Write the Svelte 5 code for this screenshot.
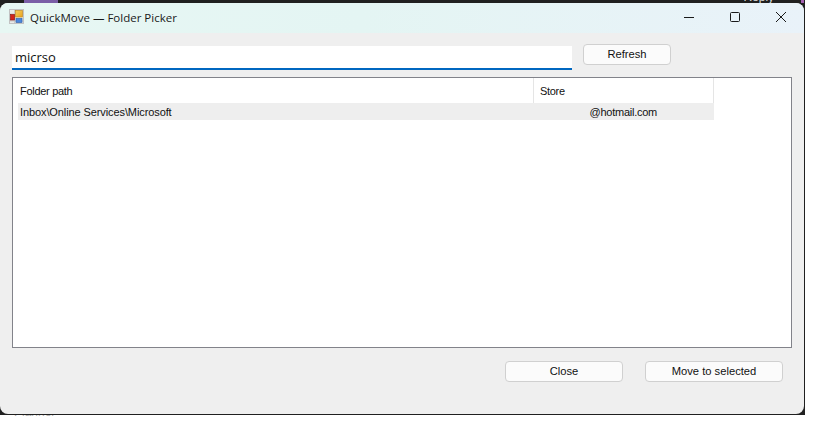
<script>
  const columns = [
    { key: 'path', label: 'Folder path' },
    { key: 'store', label: 'Store' }
  ];
  const row = { path: 'Inbox\\Online Services\\Microsoft', store: '@hotmail.com' };
</script>

<div class="page">
  <div class="desk">
    <div class="backdrop">
      <span class="blob"></span>
      <span class="reply">Reply</span>
      <span class="blob2"></span>
    </div>
    <div class="window">
      <header class="titlebar">
        <svg class="appicon" width="15" height="15" viewBox="0 0 15 15" aria-hidden="true">
          <defs>
            <linearGradient id="gold" x1="0" y1="0" x2="1" y2="1">
              <stop offset="0" stop-color="#f7cf5c"/>
              <stop offset="1" stop-color="#e9a21f"/>
            </linearGradient>
          </defs>
          <rect x="0.5" y="0.5" width="14" height="14" fill="#e9ebe9" stroke="#c2c2c2"/>
          <path d="M1 5h4.5M5.5 1v13M1 12h13" stroke="#c9c9c9" fill="none"/>
          <rect x="6.5" y="1.5" width="7" height="6.5" fill="url(#gold)" stroke="#c08a24" stroke-width="0.7"/>
          <rect x="1.5" y="5.5" width="4" height="5.5" fill="#d3231b" stroke="#8f1a14" stroke-width="0.7"/>
          <rect x="7" y="9.5" width="6" height="4" fill="#4c86dc" stroke="#3565ad" stroke-width="0.7"/>
        </svg>
        <span class="title">QuickMove — Folder Picker</span>
        <div class="controls">
          <button class="ctl" aria-label="Minimize">
            <svg width="12" height="12" viewBox="0 0 12 12"><path d="M1 6.5h10" stroke="#1a1a1a" fill="none"/></svg>
          </button>
          <button class="ctl" aria-label="Maximize">
            <svg width="12" height="12" viewBox="0 0 12 12"><rect x="1.5" y="1.5" width="9" height="9" rx="1" stroke="#1a1a1a" fill="none"/></svg>
          </button>
          <button class="ctl" aria-label="Close window">
            <svg width="12" height="12" viewBox="0 0 12 12"><path d="M1 1l10 10M11 1L1 11" stroke="#1a1a1a" fill="none"/></svg>
          </button>
        </div>
      </header>

      <div class="body">
        <div class="search">
          <div class="input">micrso</div>
          <button class="btn refresh">Refresh</button>
        </div>

        <div class="list">
          <div class="table">
            <div class="head">
              {#each columns as c}
                <div class="hcell {c.key}">{c.label}</div>
              {/each}
            </div>
            <div class="row">
              <div class="cell path">{row.path}</div>
              <div class="cell store">{row.store}</div>
            </div>
          </div>
        </div>

        <div class="actions">
          <button class="btn close">Close</button>
          <button class="btn move">Move to selected</button>
        </div>
      </div>
    </div>
  </div>
  <div class="under"><span>Planner</span></div>
</div>

<style>
  :global(body) {
    margin: 0;
    background: #fff;
    overflow: hidden;
  }
  .page {
    width: 821px;
    height: 422px;
    font-family: "Liberation Sans", Arial, sans-serif;
    font-size: 11px;
    color: #111;
  }
  .desk {
    width: 805px;
    height: 415px;
    background: #202020;
    padding: 0 1px 1px 0;
    box-sizing: border-box;
    display: flex;
    flex-direction: column;
  }
  .backdrop {
    height: 3px;
    flex: none;
    display: flex;
    overflow: hidden;
    color: #ddd;
    line-height: 12px;
  }
  .blob {
    width: 36px;
    height: 3px;
    margin-left: 24px;
    background: #7b5ea7;
  }
  .reply {
    margin-left: 685px;
    margin-top: -9px;
    font-size: 12px;
  }
  .blob2 {
    width: 3px;
    height: 3px;
    margin-left: 27px;
    background: #a35fb0;
  }
  .window {
    flex: 1;
    background: #efefef;
    border-radius: 8px;
    overflow: hidden;
    display: flex;
    flex-direction: column;
  }
  .titlebar {
    height: 30px;
    flex: none;
    display: flex;
    align-items: center;
    padding-left: 9px;
    background: linear-gradient(90deg, #e7f7f3 0%, #e4f5f3 45%, #e9f2f9 100%);
  }
  .appicon {
    flex: none;
    margin-top: -3px;
  }
  .title {
    margin-left: 6px;
    margin-top: -2px;
    font-family: "Open Sans", "Noto Sans", sans-serif;
    font-size: 11.5px;
    color: #1a1a1a;
  }
  .controls {
    margin-left: auto;
    display: flex;
    margin-top: -3px;
  }
  .ctl {
    width: 46px;
    height: 30px;
    border: 0;
    background: none;
    padding: 0;
    display: flex;
    align-items: center;
    justify-content: center;
  }
  .body {
    flex: 1;
    display: flex;
    flex-direction: column;
    padding: 11px 12px 0;
  }
  .search {
    display: flex;
    align-items: flex-start;
    gap: 11px;
    height: 33px;
  }
  .input {
    width: 560px;
    height: 24px;
    margin-top: 2px;
    box-sizing: border-box;
    background: #fff;
    border-bottom: 2px solid #0067c0;
    padding-left: 3px;
    font-family: "Open Sans", "Noto Sans", sans-serif;
    font-size: 13px;
    line-height: 23px;
    color: #111;
  }
  .btn {
    height: 21px;
    box-sizing: border-box;
    border: 1px solid #d0d0d0;
    border-radius: 4px;
    background: #fbfbfb;
    font: inherit;
    font-size: 11.2px;
    color: #111;
    padding: 0 0 2px;
  }
  .refresh { width: 88px; }
  .list {
    width: 780px;
    height: 271px;
    box-sizing: border-box;
    background: #fff;
    border: 1px solid #82838a;
  }
  .table { width: 701px; }
  .head {
    display: flex;
    height: 25px;
  }
  .hcell {
    box-sizing: border-box;
    padding-left: 7px;
    line-height: 27px;
    letter-spacing: -0.3px;
    border-right: 1px solid #e5e5e5;
  }
  .hcell.path { width: 521px; }
  .hcell.store { width: 180px; padding-left: 6px; }
  .row {
    display: flex;
    height: 17px;
    margin-left: 5px;
    background: #eeeeee;
    line-height: 19px;
  }
  .cell.path { width: 516px; padding-left: 2px; box-sizing: border-box; letter-spacing: -0.1px; }
  .cell.store { width: 180px; text-align: right; padding-right: 57px; box-sizing: border-box; letter-spacing: -0.25px; }
  .actions {
    display: flex;
    justify-content: flex-end;
    gap: 22px;
    padding: 13px 9px 0 0;
  }
  .close { width: 118px; }
  .move { width: 138px; }
  .under {
    height: 7px;
    overflow: hidden;
    padding-left: 14px;
    color: #aaa;
    line-height: 8px;
  }
  .under span {
    display: block;
    margin-top: -7px;
    font-size: 12px;
  }
</style>
